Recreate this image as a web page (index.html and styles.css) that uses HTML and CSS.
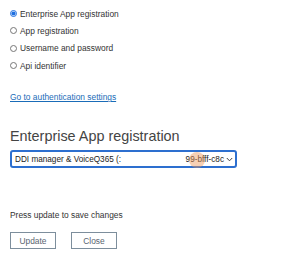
FILE: index.html
```html
<!DOCTYPE html>
<html lang="en">
<head>
    <meta charset="UTF-8">
    <meta name="viewport" content="width=device-width, initial-scale=1.0">
    <title>Authentication</title>
    <link rel="stylesheet" href="styles.css">
</head>
<body>
<div class="container">
    <form class="auth-options">
        <label class="option"><input type="radio" name="auth" checked> Enterprise App registration</label>
        <label class="option"><input type="radio" name="auth"> App registration</label>
        <label class="option"><input type="radio" name="auth"> Username and password</label>
        <label class="option"><input type="radio" name="auth"> Api identifier</label>
    </form>

    <a class="settings-link" href="#">Go to authentication settings</a>

    <h2>Enterprise App registration</h2>

    <div class="select-box">
        <span class="select-start">DDI manager &amp; VoiceQ365 (:</span>
        <span class="select-end">99-bfff-c8c</span>
        <svg class="chevron" width="7" height="5" viewBox="0 0 7 5"><path d="M0.8 1 L3.5 3.8 L6.2 1" fill="none" stroke="#444" stroke-width="1"/></svg>
        <span class="cursor-dot"></span>
    </div>

    <p class="hint">Press update to save changes</p>

    <div class="actions">
        <button type="button">Update</button>
        <button type="button">Close</button>
    </div>
</div>
</body>
</html>
```

FILE: styles.css
```css
body {
    font-family: "Liberation Sans", Arial, sans-serif;
    margin: 0;
    padding: 0;
    background-color: #fff;
    color: #333;
}

.container {
    padding: 5px 0 0 10px;
}

.auth-options {
    display: flex;
    flex-direction: column;
    margin: 0;
}

.option {
    display: flex;
    align-items: center;
    gap: 3px;
    height: 17.3px;
    font-size: 8.4px;
}

.option input {
    margin: 0;
    width: 7px;
    height: 7px;
    accent-color: #1f6fe0;
}

.settings-link {
    display: block;
    margin-top: 17px;
    font-size: 8.4px;
    line-height: 12px;
    color: #1a6cb8;
}

h2 {
    margin: 24px 0 0;
    font-size: 14.4px;
    font-weight: normal;
    line-height: 18px;
    color: #444;
}

.select-box {
    position: relative;
    display: flex;
    align-items: center;
    width: 218px;
    height: 14px;
    margin-top: 5px;
    padding: 0 2px 0 3px;
    border: 2px solid #2d6fcf;
    border-radius: 3px;
    font-size: 8.2px;
    color: #222;
}

.select-end {
    margin-left: auto;
}

.chevron {
    margin-left: 2px;
}

.cursor-dot {
    position: absolute;
    left: 177px;
    top: 0;
    width: 16px;
    height: 16px;
    border-radius: 50%;
    background-color: rgba(236, 150, 90, 0.45);
}

.hint {
    margin: 41px 0 0;
    font-size: 8.4px;
    line-height: 12px;
}

.actions {
    display: flex;
    gap: 15px;
    margin-top: 11px;
}

.actions button {
    width: 46px;
    height: 17px;
    padding: 0;
    font-family: inherit;
    font-size: 8.4px;
    color: #5a6570;
    background-color: #fff;
    border: 1px solid #7d8e9c;
    border-radius: 0;
}
```
